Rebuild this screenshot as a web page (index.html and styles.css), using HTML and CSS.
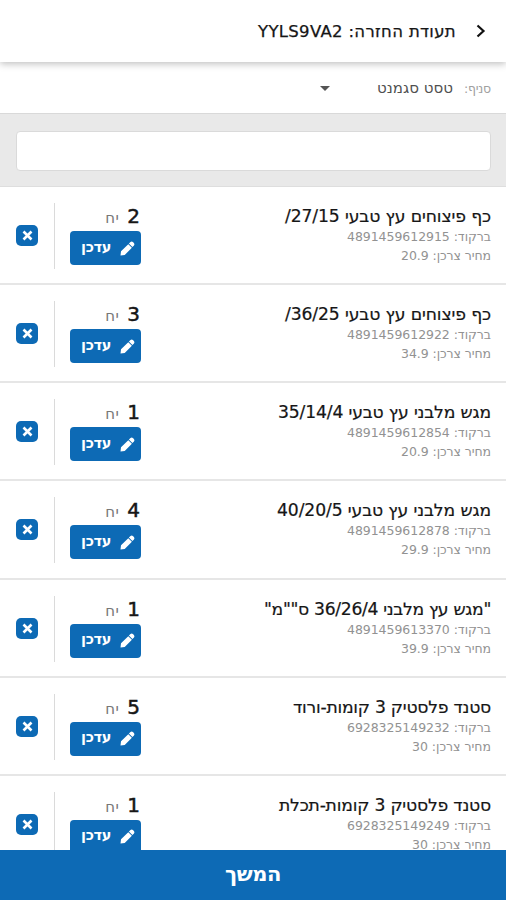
FILE: index.html
```
<!DOCTYPE html>
<html lang="he" dir="rtl">
<head>
<meta charset="utf-8">
<title>תעודת החזרה</title>
<link rel="stylesheet" href="styles.css">
</head>
<body>
<div class="app">
  <header class="top">
    <svg class="back" viewBox="0 0 10 14"><path d="M1.500 1.500 7.500 7l-6 5.500"/></svg>
    <h1><span class="fit" data-w="198">תעודת החזרה: YYLS9VA2</span></h1>
  </header>
  <div class="branch">
    <span class="branch-label"><span class="fit" data-w="27">סניף:</span></span>
    <span class="branch-name"><span class="fit" data-w="76">טסט סגמנט</span></span>
    <svg class="caret" viewBox="0 0 10 5"><path d="M0 0h10L5 5z"/></svg>
  </div>
  <div class="search"><input type="text"></div>
  <main class="list" id="list"></main>
  <button class="next"><span class="fit" data-w="56">המשך</span></button>
</div>
<script src="script.js"></script>
</body>
</html>
```
FILE: styles.css
```
* { box-sizing: border-box; }
body { margin: 0; font-family: "DejaVu Sans", sans-serif; color: #161616; background: #fff; }
.app { width: 506px; height: 900px; display: flex; flex-direction: column; overflow: hidden; }
.fit { display: inline-block; white-space: nowrap; }
.top { flex: none; height: 62px; display: flex; align-items: center; padding: 0 20px 0 0; box-shadow: 0 2px 7px rgba(0,0,0,.25); z-index: 1; }
.back { width: 10px; height: 14px; fill: none; stroke: #111; stroke-width: 2.2; }
h1 { margin: 2px 20px 0 0; font-size: 16.5px; font-weight: 400; line-height: 24px; -webkit-text-stroke: .25px #161616; }
.branch { flex: none; height: 51px; display: flex; align-items: center; padding: 2px 15px 0 0; }
.branch-label { font-size: 12.5px; color: #a0a0a0; }
.branch-name { font-size: 15px; color: #505050; margin-right: 11px; margin-top: -1px; }
.caret { width: 10px; height: 5px; fill: #555; margin-right: 47px; }
.search { flex: none; height: 74px; padding: 17px 15px 15px 16px; background: #e9e9e9; border-top: 1px solid #d9d9d9; border-bottom: 1px solid #dedede; }
.search input { display: block; width: 100%; height: 40px; border: 1px solid #dadada; border-radius: 4px; background: #fff; outline: 0; }
.list { flex: 1; min-height: 0; overflow: hidden; }
.item { height: 98.15px; border-bottom: 2px solid #e6e6e6; display: flex; padding: 16px 15px 0 16px; }
.info { flex: 1; }
.name { font-size: 17.2px; line-height: 26px; height: 24px; -webkit-text-stroke: .2px #161616; }
.meta { font-size: 12.5px; line-height: 19px; height: 19px; color: #929292; }
.amount { width: 71px; }
.qty { display: flex; align-items: baseline; height: 28px; line-height: 27px; font-size: 20px; padding-right: 1px; -webkit-text-stroke: .5px #161616; }
.unit { font-size: 15px; color: #777; margin-right: 8px; -webkit-text-stroke: 0; }
.edit { width: 71px; height: 34px; border: 0; border-radius: 4px; background: #0d6ab5; color: #fff; display: flex; align-items: center; padding: 0 6px 0 0; font: 600 14.5px "DejaVu Sans", sans-serif; }
.edit .fit { margin: 0 9px 3px 0; }
.pencil { width: 15px; height: 15px; fill: #fff; }
.sep { width: 1px; height: 66px; background: #dadada; margin: 0 15px 0 16px; }
.del { width: 22px; height: 21px; margin-top: 22px; padding: 0; border: 0; border-radius: 5px; background: #0d6ab5; display: grid; place-items: center; }
.del svg { width: 11px; height: 11px; stroke: #fff; stroke-width: 2.6; fill: none; }
.next { flex: none; height: 50px; border: 0; background: #0d6ab5; color: #fff; font: bold 21px "DejaVu Sans", sans-serif; padding: 0 0 3px; }
```
FILE: script.js
```
const items = [
  ["כף פיצוחים עץ טבעי 27/15/", 206, "4891459612915", "20.9", 90, 2],
  ["כף פיצוחים עץ טבעי 36/25/", 206, "4891459612922", "34.9", 90, 3],
  ["מגש מלבני עץ טבעי 35/14/4", 213, "4891459612854", "20.9", 90, 1],
  ["מגש מלבני עץ טבעי 40/20/5", 214, "4891459612878", "29.9", 90, 4],
  ["\"מגש עץ מלבני 36/26/4 ס\"\"מ\"", 227, "4891459613370", "39.9", 90, 1],
  ["סטנד פלסטיק 3 קומות-ורוד", 198, "6928325149232", "30", 79, 5],
  ["סטנד פלסטיק 3 קומות-תכלת", 212, "6928325149249", "30", 79, 1]
];
document.getElementById("list").innerHTML = items.map(([name, nw, code, price, pw, qty]) => `
  <article class="item">
    <div class="info">
      <div class="name"><span class="fit" data-w="${nw}">${name}</span></div>
      <div class="meta"><span class="fit" data-w="144">ברקוד: ${code}</span></div>
      <div class="meta"><span class="fit" data-w="${pw}">מחיר צרכן: ${price}</span></div>
    </div>
    <div class="amount">
      <div class="qty"><span>${qty}</span><span class="unit"><span class="fit" data-w="14">יח</span></span></div>
      <button class="edit"><svg class="pencil" viewBox="0 0 15 15"><path d="M.500 14.500 1 10.200 8.300 3.200l3.600 3.500-7.200 7.200zM8.900 2.600 10.500 1q1.300-.9 2.400.1l1 1q1.100 1.200.1 2.400l-1.600 1.600z"/></svg><span class="fit" data-w="30">עדכן</span></button>
    </div>
    <div class="sep"></div>
    <button class="del"><svg viewBox="0 0 11 11"><path d="m1.500 1.500 8 8m0-8-8 8"/></svg></button>
  </article>`).join("");

document.querySelectorAll(".fit").forEach(el => {
  const gap = (el.dataset.w - el.getBoundingClientRect().width) / el.textContent.length;
  el.style.letterSpacing = gap + "px";
});
```
